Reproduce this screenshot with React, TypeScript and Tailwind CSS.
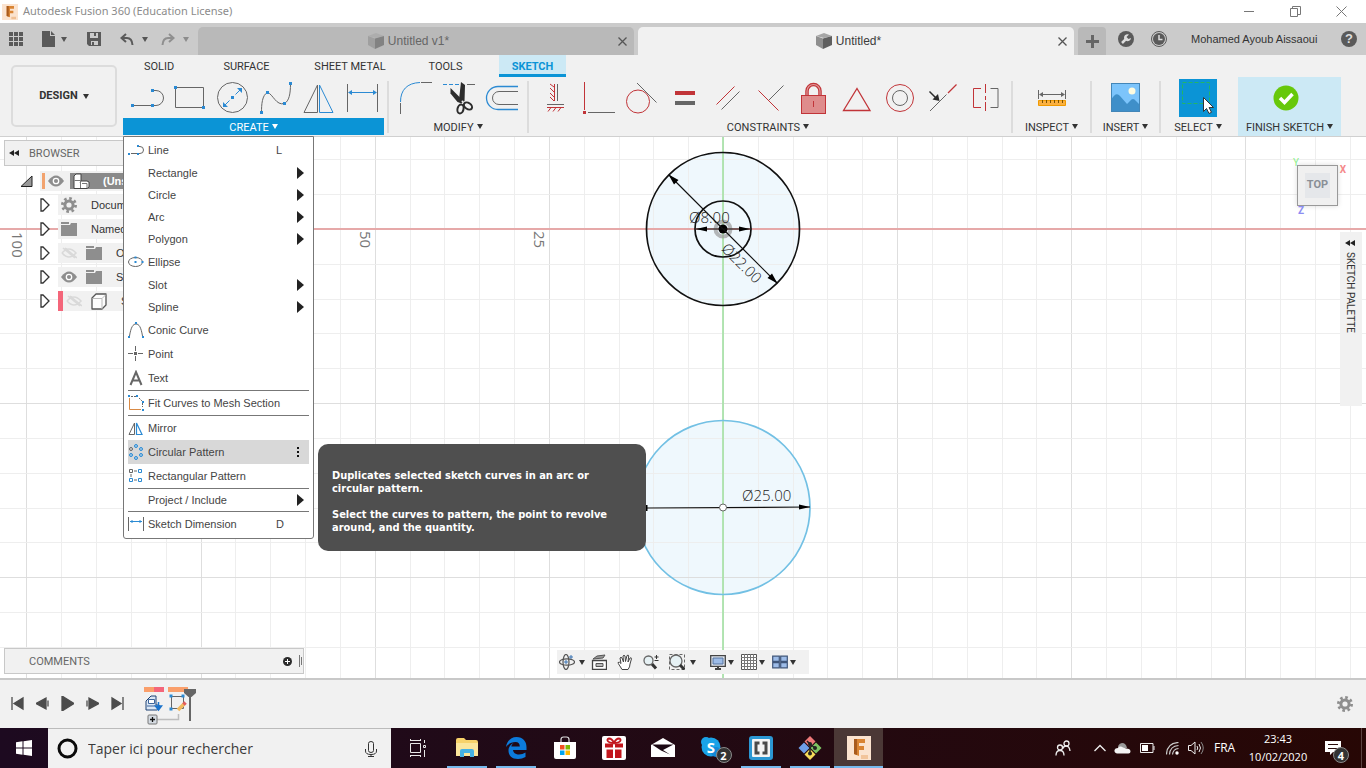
import type { ReactNode } from "react";

const DARK = "#666666";
const BLUE = "#2b8ad3";
const RED = "#c13438";

type IconProps = { w: number; h: number; children: ReactNode; className?: string };

const Icon = ({ w, h, children, className = "" }: IconProps) => (
  <svg width={w} height={h} viewBox={`0 0 ${w} ${h}`} fill="none" className={`shrink-0 ${className}`} aria-hidden="true">
    {children}
  </svg>
);

const Caret = ({ className = "" }: { className?: string }) => (
  <Icon w={6} h={5} className={className}>
    <path d="M0 0h6L3 5z" fill="currentColor" />
  </Icon>
);

const Dot = ({ x, y, c = BLUE, s = 3 }: { x: number; y: number; c?: string; s?: number }) => (
  <rect x={x - s / 2} y={y - s / 2} width={s} height={s} fill={c} />
);

const FusionLogo = ({ size }: { size: number }) => (
  <svg width={size} height={size} viewBox="0 0 24 24" aria-hidden="true" className="shrink-0">
    <rect width="24" height="24" fill="#fbe3cf" />
    <path d="M7 3h11v4h-6v3h5v4h-5v6l-5-2z" fill="#d98433" />
    <path d="M7 3h3v16l-3-1z" fill="#a85a1c" />
    <path d="M14 20h7M14 22h7" stroke="#e9a566" strokeWidth="1" />
  </svg>
);

const Gear = ({ size, hole }: { size: number; hole: string }) => (
  <svg width={size} height={size} viewBox="0 0 16 16" aria-hidden="true" className="shrink-0">
    <circle cx="8" cy="8" r="5.6" fill="#8e8e8e" />
    <circle cx="8" cy="8" r="6.6" fill="none" stroke="#8e8e8e" strokeWidth="2.8" strokeDasharray="2.6 2.584" />
    <circle cx="8" cy="8" r="2.6" fill={hole} />
  </svg>
);

/* ---------- Ribbon tools, each drawn in a 43x36 cell ---------- */

const createTools = [
  {
    name: "Line",
    art: (
      <>
        <path d="M7 25.5H27M29 10.5h2a7.5 7.5 0 0 1 0 15h-3" stroke={DARK} />
        <Dot x={7.5} y={25.5} /><Dot x={27.5} y={25.5} /><Dot x={27.5} y={10.5} />
      </>
    ),
  },
  {
    name: "Rectangle",
    art: (
      <>
        <path d="M7.5 7.5h28v20h-28z" stroke={DARK} />
        <Dot x={7.5} y={7.5} /><Dot x={35.5} y={27.5} />
      </>
    ),
  },
  {
    name: "Circle",
    art: (
      <>
        <circle cx="21.5" cy="17.5" r="15" stroke={DARK} />
        <path d="M13 26l5.5-5.5M24.5 14.5l5.5-5.5" stroke={BLUE} />
        <path d="M12 27v-5l5 5zM31 8v5l-5-5z" fill={BLUE} />
        <Dot x={21.5} y={17.5} />
      </>
    ),
  },
  {
    name: "Spline",
    art: (
      <>
        <path d="M7.5 32C7.5 25 8 15 13.5 12.5C19 14 22 26 30.5 23.5C35 21 36.5 14 36.5 4" stroke={DARK} />
        <Dot x={7.5} y={32.5} /><Dot x={13.5} y={12.5} /><Dot x={30.5} y={23.5} /><Dot x={36.5} y={3.5} />
      </>
    ),
  },
  {
    name: "Mirror",
    art: (
      <>
        <path d="M20.5 5v27.5H7z" stroke={DARK} />
        <path d="M22.5 5v27.5H36z" stroke={BLUE} />
      </>
    ),
  },
  {
    name: "Sketch Dimension",
    art: (
      <>
        <path d="M7.5 4v28M37.5 4v28" stroke={DARK} />
        <path d="M9 12.5h27" stroke={BLUE} />
        <path d="M8 12.5l4-2.5v5zM37 12.5l-4-2.5v5z" fill={BLUE} />
      </>
    ),
  },
];

const modifyTools = [
  {
    name: "Fillet",
    art: (
      <>
        <path d="M5.5 34V23M26 2.5h11" stroke={DARK} />
        <path d="M5.5 22C5.5 10 12 3 25 2.5" stroke={BLUE} />
      </>
    ),
  },
  {
    name: "Trim",
    art: (
      <>
        <path d="M5 4.5h16" stroke={BLUE} strokeDasharray="4 2" />
        <path d="M29 4.5h8" stroke={DARK} />
        <path d="M23 2l4 3-.5 16-3.5 1.5-2-3z" fill="#2c2c2c" />
        <path d="M12.5 8l13 13-2 2.5-4-1.5-7-8.5z" fill="#2c2c2c" />
        <ellipse cx="22.5" cy="29" rx="3" ry="4.5" stroke="#2c2c2c" strokeWidth="2" transform="rotate(14 22.5 29)" />
        <ellipse cx="30" cy="26" rx="4.5" ry="3" stroke="#2c2c2c" strokeWidth="2" transform="rotate(35 30 26)" />
        <circle cx="24.5" cy="21.5" r="1" fill="#f1f1f1" />
      </>
    ),
  },
  {
    name: "Offset",
    art: (
      <>
        <path d="M37 6.5H17a11.5 11.5 0 0 0 0 23h20" stroke={BLUE} strokeWidth="1.3" />
        <path d="M37 11.5H18a6.5 6.5 0 0 0 0 13h19" stroke={DARK} />
      </>
    ),
  },
];

const constraintTools = [
  {
    name: "Horizontal/Vertical",
    art: (
      <>
        <path d="M20.5 4v17M13 27.5h17M20 7l-4-3M20 12l-4-4M20 17l-4-4M20 21l-4-4M14 31.5l3-4M19 31.5l3-4M24 31.5l3-4" stroke={RED} />
        <path d="M23.5 4v17M13 24.5h17" stroke={DARK} />
      </>
    ),
  },
  {
    name: "Coincident",
    art: (
      <>
        <path d="M7.5 2v28" stroke={RED} />
        <path d="M11 32.5h27" stroke={DARK} />
        <Dot x={7.5} y={32.5} c={RED} />
      </>
    ),
  },
  {
    name: "Tangent",
    art: (
      <>
        <circle cx="18" cy="21.5" r="11.5" stroke={RED} />
        <path d="M17 3l19.5 19.5" stroke={DARK} />
      </>
    ),
  },
  {
    name: "Equal",
    art: (
      <>
        <path d="M12 13h20" stroke={RED} strokeWidth="4" />
        <path d="M12 23h20" stroke={DARK} strokeWidth="4" />
      </>
    ),
  },
  {
    name: "Parallel",
    art: (
      <>
        <path d="M10.5 24.5l18-18" stroke={RED} />
        <path d="M15.5 29.5l18-18" stroke={DARK} />
      </>
    ),
  },
  {
    name: "Perpendicular",
    art: (
      <>
        <path d="M9.5 10.5l20 20" stroke={RED} />
        <path d="M20 20l14.5-14.5" stroke={DARK} />
      </>
    ),
  },
  {
    name: "Fix/Unfix",
    art: (
      <>
        <path d="M15 15.5V11a6.5 6.5 0 0 1 13 0v4.5" stroke={RED} strokeWidth="3.5" />
        <path d="M15 15.5V11a6.5 6.5 0 0 1 13 0v4.5" stroke="#e09a9a" strokeWidth="1.2" />
        <rect x="9.5" y="15.5" width="24" height="18" fill="#df8c8c" stroke={RED} />
        <path d="M21.5 21v6" stroke={RED} />
      </>
    ),
  },
  { name: "Midpoint", art: <path d="M22 8.5l13 22H8.5z" stroke={RED} strokeWidth="1.3" /> },
  {
    name: "Concentric",
    art: (
      <>
        <circle cx="22" cy="18" r="13.5" stroke={RED} />
        <circle cx="22" cy="18" r="7.5" stroke={DARK} />
      </>
    ),
  },
  {
    name: "Collinear",
    art: (
      <>
        <path d="M35.5 4.5L27 13" stroke={RED} strokeWidth="1.3" />
        <path d="M25.5 14.5L9 31" stroke={DARK} />
        <path d="M8.5 11.5l6 6" stroke="#2c2c2c" strokeWidth="1.5" />
        <path d="M18.5 21l-7-1.5 5.5-5.5z" fill="#2c2c2c" />
      </>
    ),
  },
  {
    name: "Symmetry",
    art: (
      <>
        <path d="M17 8.5H9.5v19H17" stroke={RED} />
        <path d="M21.5 4v9M21.5 16v4M21.5 22v9" stroke={RED} />
        <path d="M26.5 8.5H34v19h-7.5" stroke={DARK} />
      </>
    ),
  },
];

type Tool = { name: string; art: ReactNode };

const ToolRow = ({ tools }: { tools: Tool[] }) => (
  <div className="flex">
    {tools.map((tool) => (
      <button key={tool.name} type="button" aria-label={tool.name} className="h-9 w-[43px]">
        <Icon w={43} h={36}>{tool.art}</Icon>
      </button>
    ))}
  </div>
);

const GroupLabel = ({ children, className = "" }: { children: ReactNode; className?: string }) => (
  <button
    type="button"
    className={`flex h-[17px] w-full items-center justify-center gap-[3px] whitespace-nowrap text-[11px] ${className}`}
  >
    <span className="pt-[2px] leading-[15px]">{children}</span>
    <Caret />
  </button>
);

const Separator = () => <div className="mt-1 h-[52px] w-[2px] shrink-0 bg-[#dcdcdc]" />;

/* ---------- Create menu ---------- */

type MenuEntry = { label: string; icon?: ReactNode; sub?: boolean; keyHint?: string; active?: boolean; line?: boolean };

const menu: MenuEntry[] = [
  {
    label: "Line",
    keyHint: "L",
    icon: (
      <>
        <path d="M3 11.5h6M11 4.5h1a3.5 3.5 0 0 1 0 7h-1" stroke={DARK} />
        <Dot x={1} y={12} s={2} /><Dot x={10} y={12} s={2} /><Dot x={10} y={4} s={2} />
      </>
    ),
  },
  { label: "Rectangle", sub: true },
  { label: "Circle", sub: true },
  { label: "Arc", sub: true },
  { label: "Polygon", sub: true },
  {
    label: "Ellipse",
    icon: (
      <>
        <ellipse cx="7.5" cy="8" rx="7" ry="4.5" stroke={DARK} />
        <Dot x={7.5} y={8} s={2} /><Dot x={14.5} y={8} s={2} /><Dot x={7.5} y={3.5} s={2} />
      </>
    ),
  },
  { label: "Slot", sub: true },
  { label: "Spline", sub: true },
  {
    label: "Conic Curve",
    icon: (
      <>
        <path d="M1.5 14C3 5 5 2 8 2s5 3 6.5 12" stroke={DARK} />
        <Dot x={1} y={15} s={2} /><Dot x={15} y={15} s={2} /><Dot x={8} y={1} s={2} />
      </>
    ),
  },
  {
    label: "Point",
    icon: (
      <>
        <path d="M7.5 0v5M7.5 10v5M0 7.5h5M10 7.5h5" stroke={DARK} />
        <Dot x={7.5} y={7.5} c={DARK} />
      </>
    ),
  },
  { label: "Text", icon: <path d="M2.5 15L8 2l5.5 13M4.500 10.500h7" stroke={DARK} strokeWidth="2" /> },
  {
    label: "Fit Curves to Mesh Section",
    line: true,
    icon: (
      <>
        <path d="M1.5 3v11.5H13" stroke="#d98a45" />
        <path d="M3 1.5h6M11 3l3 3M14.5 8v4" stroke={DARK} strokeDasharray="2 1" />
        <Dot x={1} y={1} s={2} /><Dot x={9} y={1} s={2} /><Dot x={15} y={7} s={2} /><Dot x={15} y={15} s={2} />
      </>
    ),
  },
  {
    label: "Mirror",
    line: true,
    icon: (
      <>
        <path d="M6.5 3v11.5H1z" stroke={DARK} />
        <path d="M8.5 3v11.5H14z" stroke={BLUE} strokeWidth="1.2" />
      </>
    ),
  },
  {
    label: "Circular Pattern",
    active: true,
    icon: (
      <>
        <g stroke={BLUE} fill="#a8cdea">
          <circle cx="8" cy="2" r="1.5" /><circle cx="13" cy="5" r="1.5" /><circle cx="13" cy="11" r="1.5" />
          <circle cx="8" cy="14" r="1.5" /><circle cx="3" cy="11" r="1.5" />
        </g>
        <circle cx="3" cy="5" r="1.5" stroke={DARK} />
      </>
    ),
  },
  {
    label: "Rectangular Pattern",
    icon: (
      <>
        <path d="M1.5 1.5h3v3h-3z" stroke={DARK} />
        <path d="M10.5 1.5h3v3h-3zM1.5 10.5h3v3h-3zM10.5 10.5h3v3h-3z" stroke={BLUE} />
        <path d="M6 3h3M6 12h3M3 6v3" stroke={DARK} />
      </>
    ),
  },
  { label: "Project / Include", sub: true, line: true },
  {
    label: "Sketch Dimension",
    line: true,
    keyHint: "D",
    icon: (
      <>
        <path d="M.5 1v14M15.5 1v14" stroke={DARK} />
        <path d="M2 5.5h12M4 4v3M12 4v3" stroke={BLUE} />
      </>
    ),
  },
];

const CreateMenu = () => (
  <ul className="absolute left-0 top-full mt-px w-[191px] rounded-b-[3px] border border-[#777] bg-white px-1 pb-[2px] pt-px font-['Liberation_Sans',Arial,sans-serif] text-[11px] text-[#444]">
    {menu.map((item) => (
      <li key={item.label} className={`relative ${item.line ? "border-t border-[#777]" : ""}`}>
        <button
          type="button"
          className={`flex w-full items-center pr-[5px] text-left ${item.icon ? "h-6" : "h-[22px]"} ${item.active ? "bg-[#d8d8d8]" : ""}`}
        >
          <Icon w={16} h={16} className="mr-1">{item.icon}</Icon>
          <span className="flex-1 whitespace-nowrap">{item.label}</span>
          {item.keyHint && <span className="w-7">{item.keyHint}</span>}
          {item.sub && (
            <Icon w={7} h={12}><path d="M0 0l7 6-7 6z" fill="#222" /></Icon>
          )}
          {item.active && (
            <Icon w={12} h={12}><path d="M6 1v2M6 5v2M6 9v2" stroke="#111" strokeWidth="2" /></Icon>
          )}
        </button>
        {item.active && (
          <div
            role="tooltip"
            className="absolute left-full top-1 ml-[9px] w-[328px] whitespace-nowrap rounded-[10px] bg-[#4f4f4f] px-[14px] pb-[17px] pt-[25px] font-['DejaVu_Sans_Condensed','Noto_Sans',sans-serif] text-[11px] font-bold leading-[13px] text-white"
          >
            <p>Duplicates selected sketch curves in an arc or<br />circular pattern.</p>
            <p className="mt-[13px]">Select the curves to pattern, the point to revolve<br />around, and the quantity.</p>
          </div>
        )}
      </li>
    ))}
  </ul>
);

/* ---------- Top bars ---------- */

const TitleBar = () => (
  <div className="flex h-[23px] items-center bg-white pl-[2px] text-[#8b8b8b]">
    <FusionLogo size={16} />
    <h1 className="ml-[5px] flex-1 font-['Noto_Sans',sans-serif] text-[11px]">Autodesk Fusion 360 (Education License)</h1>
    <button type="button" aria-label="Minimize" className="flex w-[46px] justify-center">
      <Icon w={11} h={11}><path d="M0 5.5h10" stroke="#777" /></Icon>
    </button>
    <button type="button" aria-label="Restore" className="flex w-[46px] justify-center">
      <Icon w={11} h={11}><path d="M.5 2.5h7v8h-7zM2.5 2.5v-2h8v8h-2.5" stroke="#777" /></Icon>
    </button>
    <button type="button" aria-label="Close window" className="mr-[2px] flex w-[46px] justify-center">
      <Icon w={11} h={11}><path d="M.5.5l10 10M10.500.5l-10 10" stroke="#777" /></Icon>
    </button>
  </div>
);

const CubeIcon = ({ className = "" }: { className?: string }) => (
  <Icon w={16} h={16} className={`mr-1 ${className}`}>
    <path d="M0 3L8 0l8 3-8 2z" fill="#a6a6a6" />
    <path d="M0 3l7 2.500V16l-7-4z" fill="#8f8f8f" />
    <path d="M7 5.500L16 3v9l-9 4z" fill="#5f5f5f" />
  </Icon>
);

const DocTab = ({ title, active }: { title: string; active?: boolean }) => (
  <div
    className={`flex h-7 flex-1 items-center rounded-t-[5px] pr-[5px] text-xs ${active ? "bg-[#f1f1f1] text-[#3c3c3c]" : "bg-[#b9b9b9] text-[#666]"}`}
  >
    <button type="button" className="flex flex-1 items-center justify-center pl-[3px]">
      <CubeIcon className={active ? "" : "opacity-60"} />
      {title}
    </button>
    <button type="button" aria-label={`Close ${title}`} className="p-[2px]">
      <Icon w={9} h={9}><path d="M.5.5l8 8M8.500.5l-8 8" stroke="#555" strokeWidth="1.3" /></Icon>
    </button>
  </div>
);

const TabBar = () => (
  <div className="flex h-8 items-end bg-[#cbcbcb] text-[#555]">
    <div className="flex h-8 w-[198px] items-center pl-[9px]">
      <button type="button" aria-label="Data panel">
        <Icon w={14} h={14}>
          <path d="M0 2h4M5 2h4M10 2h4M0 7h4M5 7h4M10 7h4M0 12h4M5 12h4M10 12h4" stroke="#5a5a5a" strokeWidth="4" />
        </Icon>
      </button>
      <button type="button" aria-label="File" className="ml-[19px] flex items-center">
        <Icon w={13} h={16}><path d="M0 0h8v5h5v11H0zM9 0l4 4H9z" fill="#5a5a5a" /></Icon>
        <Caret className="ml-[6px]" />
      </button>
      <button type="button" aria-label="Save" className="ml-5">
        <Icon w={14} h={14}>
          <path d="M0 0h14v14H2l-2-2z" fill="#5a5a5a" />
          <path d="M3 1h8v5H3zM4 9h7v4H4z" fill="#cbcbcb" />
          <path d="M8 1v3M6 10v3" stroke="#5a5a5a" strokeWidth="2" />
        </Icon>
      </button>
      <button type="button" aria-label="Undo" className="ml-[19px] flex items-center">
        <Icon w={14} h={13}><path d="M6 1L1.5 5 6 9M2 5h5q5 0 5.5 7" stroke="#5a5a5a" strokeWidth="2" /></Icon>
        <Caret className="ml-2" />
      </button>
      <button type="button" aria-label="Redo" className="ml-[13px] flex items-center text-[#8c8c8c]">
        <Icon w={14} h={13}><path d="M8 1l4.5 4L8 9M12 5H7q-5 0-5.5 7" stroke="#8f8f8f" strokeWidth="2" /></Icon>
        <Caret className="ml-2" />
      </button>
    </div>
    <div className="flex flex-1 gap-1">
      <DocTab title="Untitled v1*" />
      <DocTab title="Untitled*" active />
    </div>
    <button type="button" aria-label="New design" className="ml-1 flex h-7 w-7 items-center justify-center rounded-t-[4px] bg-[#b9b9b9]">
      <Icon w={13} h={13}><path d="M0 6.5h13M6.5 0v13" stroke="#666" strokeWidth="3" /></Icon>
    </button>
    <div className="flex h-8 w-[260px] items-center pl-3 text-[11px] text-[#333]">
      <button type="button" aria-label="Extensions">
        <Icon w={16} h={16}>
          <circle cx="8" cy="8" r="8" fill="#5a5a5a" />
          <path d="M4 12l4.5-4.5" stroke="#ddd" strokeWidth="2.5" />
          <path d="M11 3.5A3.5 3.5 0 1 0 13 7l-2.5 1-2-2z" fill="#ddd" />
        </Icon>
      </button>
      <button type="button" aria-label="Job status" className="ml-[17px]">
        <Icon w={16} h={16}>
          <circle cx="8" cy="8" r="7.5" stroke="#5a5a5a" />
          <circle cx="8" cy="8" r="6" fill="#5a5a5a" />
          <path d="M8 4v4.5h3.5" stroke="#ddd" strokeWidth="1.5" />
        </Icon>
      </button>
      <button type="button" className="ml-6 flex-1 whitespace-nowrap text-left">Mohamed Ayoub Aissaoui</button>
      <button type="button" aria-label="Help" className="mr-[9px] flex h-4 w-4 items-center justify-center rounded-full bg-[#5a5a5a] text-[13px] font-bold leading-4 text-[#ddd]">
        ?
      </button>
    </div>
  </div>
);

const workspaceTabs = [
  { name: "SOLID", box: "w-[72px]" },
  { name: "SURFACE", box: "w-[103px]" },
  { name: "SHEET METAL", box: "w-[104px]" },
  { name: "TOOLS", box: "w-[87px]" },
];

const Ribbon = () => (
  <div className="relative z-10 flex border-b border-[#d0d0d0] bg-[#f1f1f1] font-[Roboto,sans-serif] text-[#333]">
    <button
      type="button"
      className="ml-[11px] mt-[10px] flex h-[62px] w-[106px] items-center justify-center gap-[5px] rounded-[5px] border-2 border-[#dcdcdc] text-[11px] font-bold"
    >
      <span className="pt-px">DESIGN</span>
      <Caret />
    </button>
    <div className="ml-[6px] flex-1">
      <div className="flex h-[22px] text-[11px]">
        {workspaceTabs.map((tab) => (
          <button key={tab.name} type="button" className={`h-[22px] whitespace-nowrap pt-[2px] ${tab.box}`}>
            {tab.name}
          </button>
        ))}
        <button type="button" className="ml-[10px] h-[22px] w-[67px] border-b-[3px] border-[#0b94d6] bg-[#cce9f5] pt-1 font-bold text-[#0b94d6]">
          SKETCH
        </button>
      </div>
      <div className="flex h-[59px]">
        <div className="relative mb-px flex w-[261px] flex-col gap-[2px] pt-[3px]">
          <div className="pl-[2px]"><ToolRow tools={createTools} /></div>
          <GroupLabel className="bg-[#0b94d6] text-white">CREATE</GroupLabel>
          <CreateMenu />
        </div>
        <div className="ml-[3px]"><Separator /></div>
        <div className="flex w-[138px] flex-col gap-[2px] pl-[6px] pt-[3px]">
          <ToolRow tools={modifyTools} />
          <div className="pr-[6px]"><GroupLabel>MODIFY</GroupLabel></div>
        </div>
        <Separator />
        <div className="flex w-[482px] flex-col gap-[2px] pt-[3px]">
          <div className="pl-[5px]"><ToolRow tools={constraintTools} /></div>
          <div className="pr-1"><GroupLabel>CONSTRAINTS</GroupLabel></div>
        </div>
        <Separator />
        <div className="flex w-[77px] flex-col items-center gap-[2px] pt-[3px]">
          <button type="button" aria-label="Measure">
            <Icon w={36} h={36}>
              <path d="M4.5 10v9M31.5 10v9M6 14.5h24" stroke={DARK} />
              <path d="M5 14.5l4-2.5v5zM31 14.5l-4-2.5v5z" fill={DARK} />
              <path d="M4.5 20.5h27v5h-27z" fill="#fbb040" stroke="#f09a00" />
              <path d="M8.5 20v3M12.5 20v3M16.5 20v3M20.5 20v3M24.5 20v3M28.5 20v3" stroke="#7a5200" />
            </Icon>
          </button>
          <GroupLabel>INSPECT</GroupLabel>
        </div>
        <Separator />
        <div className="flex w-[67px] flex-col items-center gap-[2px] pt-[3px]">
          <button type="button" aria-label="Insert image">
            <Icon w={36} h={36}>
              <rect x="3" y="3" width="29" height="29" fill="#7cc4fb" />
              <path d="M3 20q5-9 9-4l7 8 3-3q3-4 6 0l4 4v7H3z" fill="#3f8fc9" />
              <rect x="3.5" y="3.5" width="28" height="28" stroke="#4386b8" />
              <circle cx="24" cy="11" r="3.5" fill="#fdfbe0" />
            </Icon>
          </button>
          <GroupLabel>INSERT</GroupLabel>
        </div>
        <Separator />
        <div className="flex w-[77px] flex-col gap-px pt-[2px]">
          <button type="button" aria-label="Select" className="ml-[18px] h-[38px] w-[38px] bg-[#0b94d6]">
            <Icon w={38} h={38}>
              <path d="M3.5 3.5h27v21h-27z" stroke="#23b567" strokeDasharray="4 2" />
              <path d="M24.5 18.5v14l3-3 2.500 5 2.500-1.200-2.400-4.800h4.400z" fill="#fff" stroke="#333" />
            </Icon>
          </button>
          <div className="pr-[3px]"><GroupLabel>SELECT</GroupLabel></div>
        </div>
        <div className="flex w-[103px] flex-col gap-[2px] bg-[#cce9f5] pt-[3px]">
          <button type="button" aria-label="Finish sketch" className="ml-[30px] w-9">
            <Icon w={36} h={36}>
              <circle cx="18" cy="18" r="12.5" fill="#67c80b" />
              <path d="M12 18l4.500 4.500 8-8.500" stroke="#fff" strokeWidth="3.5" />
            </Icon>
          </button>
          <GroupLabel>FINISH SKETCH</GroupLabel>
        </div>
      </div>
    </div>
  </div>
);

/* ---------- Canvas ---------- */

const STEP = 34.83;
const columns = Array.from({ length: 40 }, (_, i) => i - 20);
const rows = Array.from({ length: 16 }, (_, i) => i - 3);

const gridColor = (i: number) => (i % 5 === 0 ? "#dadada" : "#ececec");

// Drawn around the sketch origin, one grid cell is 5 mm
const SketchView = () => (
  <svg
    className="absolute inset-0 h-full w-full bg-white font-['Open_Sans',sans-serif]"
    viewBox="-723 -92 1366 541"
    preserveAspectRatio="xMidYMid slice"
    role="img"
    aria-label="Sketch"
  >
    <circle r="76.5" fill="#eff8fd" />
    <circle cy="278.5" r="87" fill="#eff8fd" />
    {columns.map((i) => (
      <path key={i} d={`M${Math.round(i * STEP) + 0.5} -92V449`} stroke={gridColor(i)} strokeOpacity="0.9" />
    ))}
    {rows.map((i) => (
      <path key={i} d={`M-723 ${Math.round(i * STEP) + 0.5}H643`} stroke={gridColor(i)} strokeOpacity="0.9" />
    ))}
    <path d="M-723 0H643" stroke="#e6a9a9" strokeWidth="1.8" />
    <path d="M0 -92V449" stroke="#abe3ab" strokeWidth="1.8" />
    <circle r="7.5" stroke="#9a9a9a" strokeOpacity="0.7" strokeWidth="4" fill="none" />
    <circle r="76.5" stroke="#111" strokeWidth="1.7" fill="none" />
    <circle r="28" stroke="#111" strokeWidth="1.7" fill="none" />
    <circle r="4.5" fill="#000" />
    <path d="M-54 -54L54 54M-27 0H27" stroke="#111" strokeWidth="1.2" />
    <path d="M-54.5 -54.5l10 5.500-4.500 4.500zM54.5 54.5l-10-5.500 4.500-4.500zM-27 0l11-2.500v5zM27 0l-11-2.500v5z" fill="#000" />
    <g fontSize="15" fontWeight="300" fill="#222">
      <text x="-34" y="-6">Ø8.00</text>
      <text transform="translate(1 17) rotate(45)" x="0" y="5">Ø22.00</text>
      <text x="19" y="272">Ø25.00</text>
    </g>
    <g fontSize="15" fill="#777">
      <text transform="translate(-711 3) rotate(90)">100</text>
      <text transform="translate(-363 2) rotate(90)">50</text>
      <text transform="translate(-189 2) rotate(90)">25</text>
    </g>
    <circle cy="278.5" r="87" stroke="#72c0e4" strokeWidth="1.7" fill="none" />
    <path d="M-77 279L87 278" stroke="#111" strokeWidth="1.2" />
    <path d="M87 278l-11-2.500v5zM-78 276h2.500v6H-78z" fill="#000" />
    <circle cy="278.5" r="3.5" fill="#fff" stroke="#666" />
  </svg>
);

const Expander = () => (
  <Icon w={10} h={14} className="mr-2"><path d="M1 1h2l6 6-6 6H1z" fill="#fff" stroke="#333" strokeWidth="1.3" /></Icon>
);

const EyeIcon = ({ off }: { off?: boolean }) => (
  <Icon w={16} h={12}>
    {off ? (
      <path d="M1 6q7-8 14 0-7 8-14 0M2 1l12 10M4 1l12 10" stroke="#d9d9d9" strokeWidth="1.6" />
    ) : (
      <>
        <path d="M0 6q8-11 16 0-8 11-16 0" fill="#8e8e8e" />
        <circle cx="8" cy="6" r="2.7" stroke="#fff" strokeWidth="1.3" />
      </>
    )}
  </Icon>
);

const FolderIcon = () => (
  <Icon w={16} h={14}><path d="M0 0h8v2H0zM0 3h9l1-2h6v13H0z" fill="#8e8e8e" /></Icon>
);

const BodyIcon = () => (
  <Icon w={16} h={17}>
    <path d="M1 5l4-4h10v11l-4 4H1z" fill="#fdfdfd" stroke="#555" strokeLinejoin="round" strokeWidth="1.3" />
    <path d="M1.5 5.5H11V16M11 5.5l4-4" stroke="#bbb" />
  </Icon>
);

const PanelTitle = ({ children }: { children: ReactNode }) => (
  <h2 className="pt-[2px] text-[11px] leading-5 text-[#666]">{children}</h2>
);

const Browser = () => (
  <aside className="ml-1 mt-[3px] w-[300px] text-[11px] text-[#333]">
    <div className="flex h-[26px] items-center border border-[#c8c8c8] bg-[#f1f1f1] pl-1 font-[Roboto,sans-serif]">
      <Icon w={10} h={6} className="mr-[10px]"><path d="M5 0v6L0 3zM10 0v6L5 3z" fill="#222" /></Icon>
      <PanelTitle>BROWSER</PanelTitle>
    </div>
    <ul className="mt-[5px] flex w-[119px] flex-col gap-1 overflow-hidden whitespace-nowrap">
      <li className="flex h-5 items-center pl-4">
        <Icon w={13} h={12} className="mr-[7px]"><path d="M1 11.5L12 1v10.5z" fill="#999" stroke="#222" /></Icon>
        <div className="flex h-5 flex-1 items-center bg-[#f1f1f1] pl-[2px]">
          <span className="mr-[3px] h-4 w-[3px] shrink-0 bg-[#f2a36e]" />
          <EyeIcon />
          <div className="ml-[6px] flex h-4 flex-1 items-center bg-[#8a8a8a] pl-[3px] font-bold text-white">
            <Icon w={17} h={16} className="mr-[13px]">
              <path d="M1 3l2-2h5v7h6l2 1v5l-2 1.500H1z" fill="#fff" stroke="#444" />
              <path d="M1.5 7.5h6V15M8 8l-1 1.5M9 10.5h5V15" stroke="#777" />
            </Icon>
            (Unsaved)
          </div>
        </div>
      </li>
      <li className="flex h-5 items-center pl-9">
        <Expander />
        <div className="flex h-5 flex-1 items-center bg-[#f1f1f1] pl-[3px]">
          <Gear size={16} hole="#f1f1f1" />
          <span className="ml-[14px]">Document Settings</span>
        </div>
      </li>
      <li className="flex h-5 items-center pl-9">
        <Expander />
        <div className="flex h-5 flex-1 items-center bg-[#f1f1f1] pl-[3px]">
          <FolderIcon />
          <span className="ml-[14px]">Named Views</span>
        </div>
      </li>
      <li className="flex h-5 items-center pl-9">
        <Expander />
        <div className="flex h-5 flex-1 items-center bg-[#f1f1f1] pl-[3px]">
          <EyeIcon off />
          <span className="ml-[9px]"><FolderIcon /></span>
          <span className="ml-[14px]">Origin</span>
        </div>
      </li>
      <li className="flex h-5 items-center pl-9">
        <Expander />
        <div className="flex h-5 flex-1 items-center bg-[#f1f1f1] pl-[3px]">
          <EyeIcon />
          <span className="ml-[9px]"><FolderIcon /></span>
          <span className="ml-[14px]">Sketches</span>
        </div>
      </li>
      <li className="flex h-5 items-center pl-9">
        <Expander />
        <div className="flex h-5 flex-1 items-center bg-[#f1f1f1]">
          <span className="mr-[3px] h-5 w-[5px] shrink-0 bg-[#f4667a]" />
          <EyeIcon off />
          <span className="ml-[9px]"><BodyIcon /></span>
          <span className="ml-[14px]">Sketch1</span>
        </div>
      </li>
    </ul>
  </aside>
);

const ViewCube = () => (
  <div className="relative mr-[2px] mt-7 h-[41px] font-[Roboto,sans-serif]">
    <button
      type="button"
      className="flex h-[41px] w-[41px] items-center justify-center border border-[#999] bg-[#f0f0f0] text-[11px] font-bold text-[#8a8f96] shadow-[0_0_5px_rgba(0,0,0,0.15)]"
    >
      <span className="flex h-[25px] w-[25px] items-center justify-center bg-[#e5e7ea]">TOP</span>
    </button>
    <span className="absolute -left-1 -top-2 text-[10px] leading-3 text-[#8bf08b]">Y</span>
    <span className="absolute -right-2 -top-px text-[10px] font-bold leading-3 text-[#f58a8a]">X</span>
    <span className="absolute left-px top-10 text-[10px] font-bold leading-3 text-[#8d8df2]">Z</span>
  </div>
);

const SketchPalette = () => (
  <button
    type="button"
    className="mr-1 mt-[95px] flex h-[174px] w-[22px] flex-col items-center bg-[#f1f1f1] pr-[2px] pt-2 font-[Roboto,sans-serif] text-[10px] text-[#333]"
  >
    <Icon w={10} h={6} className="mb-[6px]"><path d="M5 0v6L0 3zM10 0v6L5 3z" fill="#222" /></Icon>
    <span className="whitespace-nowrap [writing-mode:vertical-rl]">SKETCH PALETTE</span>
  </button>
);

const Comments = () => (
  <div className="ml-1 flex h-[26px] w-[300px] items-center justify-between border border-[#c8c8c8] bg-[#f1f1f1] pl-6 font-[Roboto,sans-serif]">
    <PanelTitle>COMMENTS</PanelTitle>
    <button type="button" aria-label="Add comment" className="flex items-center gap-[7px]">
      <Icon w={9} h={9}>
        <circle cx="4.5" cy="4.5" r="4.5" fill="#2b2b2b" />
        <path d="M4.5 2v5M2 4.5h5" stroke="#fff" />
      </Icon>
      <Icon w={4} h={12}><path d="M.5 0v12M2.5 2v8" stroke="#777" /></Icon>
    </button>
  </div>
);

const navTools = [
  {
    name: "Orbit",
    caret: "ml-1 mr-[6px]",
    art: (
      <>
        <ellipse cx="8" cy="8" rx="7.5" ry="3.2" stroke="#555" strokeWidth="1.2" />
        <ellipse cx="7" cy="8" rx="3" ry="7.5" stroke="#555" strokeWidth="1.2" />
        <path d="M7 6v4M5 8h4M10 3h4M12 1v4" stroke="#3a74b4" />
      </>
    ),
  },
  {
    name: "Look At",
    art: (
      <>
        <path d="M1.5 6.5h14v9h-14z" fill="#fff" stroke="#444" strokeWidth="1.3" />
        <path d="M5 9.5h7v3H5z" fill="#bbb" stroke="#555" />
        <path d="M2 5l4-3 8-1-2 3z" fill="#999" stroke="#555" />
      </>
    ),
  },
  {
    name: "Pan",
    art: (
      <path
        d="M5 15.5C3 12 1 9.5 1 8.5q1.500-1 3 1L3 4q1-1.500 2 0l1.500 4L6 2q1-1.500 2 0l.5 5.500L10 1.500q1.500-1 1.700.5L11 8l2-4q1.500-.7 1.500.7L13 10q0 3-2 5.500z"
        fill="#fff"
        stroke="#444"
      />
    ),
  },
  {
    name: "Zoom",
    art: (
      <>
        <circle cx="5.5" cy="6.5" r="4.5" fill="#e6f1f4" stroke="#666" strokeWidth="1.3" />
        <path d="M9 10l4 4.500" stroke="#333" strokeWidth="3" />
        <path d="M13.5 1v4M11.5 3h4M11.5 6.5h4" stroke="#333" />
      </>
    ),
  },
  {
    name: "Fit",
    caret: "ml-[5px] mr-[14px]",
    art: (
      <>
        <path d="M.5.5h15v15H.5z" stroke="#666" strokeDasharray="3 2" />
        <circle cx="7" cy="7" r="6" fill="#e6f1f4" stroke="#666" strokeWidth="1.3" />
        <path d="M11 11l4.500 4.500" stroke="#333" strokeWidth="3" />
      </>
    ),
  },
  {
    name: "Display Settings",
    caret: "ml-[2px] mr-[7px]",
    art: (
      <>
        <path d="M.7 1.7h14.6v10.6H.7z" fill="#dfe5ee" stroke="#444" strokeWidth="1.3" />
        <path d="M3 4h10v6H3z" fill="#9dbce8" stroke="#56759f" />
        <path d="M5 15h6M8 12v3" stroke="#444" strokeWidth="2" />
      </>
    ),
  },
  {
    name: "Grid and Snaps",
    caret: "ml-[2px] mr-[7px]",
    art: (
      <>
        <path d="M.5.5h15v15H.5z" fill="#fff" stroke="#555" />
        <path d="M3.5 0v16M6.5 0v16M9.5 0v16M12.5 0v16M0 3.5h16M0 6.5h16M0 9.5h16M0 12.5h16" stroke="#777" />
      </>
    ),
  },
  {
    name: "Viewports",
    caret: "ml-[2px]",
    art: (
      <path d="M.7 2.200h6.600v5.100H.7zM8.700 2.200h6.600v5.100H8.700zM.7 8.700h6.600v5.100H.7zM8.700 8.700h6.600v5.100H8.700z" fill="#9dbce8" stroke="#3f567a" strokeWidth="1.2" />
    ),
  },
];

const NavBar = () => (
  <div className="flex h-6 w-[252px] items-center bg-[#f1f1f1] pl-[2px] text-[#333]">
    {navTools.map((tool) => (
      <button key={tool.name} type="button" aria-label={tool.name} className={`flex items-center ${tool.caret ? "" : "mr-[10px]"}`}>
        <Icon w={16} h={16}>{tool.art}</Icon>
        {tool.caret && <Caret className={tool.caret} />}
      </button>
    ))}
  </div>
);

const Canvas = () => (
  <main className="relative flex flex-1 flex-col justify-between overflow-hidden">
    <SketchView />
    <div className="relative flex items-start justify-between">
      <Browser />
      <div className="flex items-start">
        <ViewCube />
        <SketchPalette />
      </div>
    </div>
    <div className="relative grid grid-cols-[1fr_auto_1fr] items-end pb-1">
      <Comments />
      <NavBar />
    </div>
  </main>
);

/* ---------- Timeline ---------- */

const playback = [
  { name: "Go to start", d: "M1 1v13M12 2v11L3 7.5z" },
  { name: "Step back", d: "M10 2v11L0 7.5zM12 4.5v6" },
  { name: "Play", d: "M1 0v15l12-7.5z" },
  { name: "Step forward", d: "M3 2v11l10-5.5zM1 4.5v6" },
  { name: "Go to end", d: "M1 2v11l9-5.5zM12 1v13" },
];

const Timeline = () => (
  <footer className="flex h-[50px] items-start border-t-2 border-[#c8c8c8] bg-[#f1f1f1]">
    <div className="flex gap-3 pl-[11px] pt-4">
      {playback.map((p) => (
        <button key={p.name} type="button" aria-label={p.name}>
          <Icon w={13} h={15}><path d={p.d} fill="#4c4c4c" stroke="#4c4c4c" strokeWidth="1.3" /></Icon>
        </button>
      ))}
    </div>
    <div className="pl-5 pt-[7px]">
      <Icon w={54} h={40}>
        <path d="M0 2.5h10M24 2.5h20" stroke="#fa9f6b" strokeWidth="5" />
        <path d="M10 2.5h10" stroke="#f4667a" strokeWidth="5" />
        <path d="M4 12l3-3h5v9h3l1 3-3 2H2V14z" fill="#dbe7f5" stroke="#1f4274" />
        <path d="M4.500 12.500h6v4h-6zM3 19h9" fill="#fff" stroke="#3c659c" />
        <path d="M14.500 15v6M11.500 19l3 4 3-4z" fill="#1c74cc" stroke="#1c74cc" strokeWidth="1.5" />
        <path d="M27.500 9.500h12v12h-12z" stroke={DARK} />
        <Dot x={27} y={9} /><Dot x={39} y={9} /><Dot x={27} y={22} />
        <path d="M34 23l6-6" stroke="#f1b95e" strokeWidth="3.5" />
        <path d="M39.500 17.500l2-2" stroke="#e25c5c" strokeWidth="3.5" />
        <path d="M13 32.500h21.500V27" stroke="#bdbdbd" strokeWidth="1.5" />
        <rect x="4" y="28" width="9" height="9" rx="1" fill="#d5dbe2" stroke="#777" />
        <path d="M8.500 30v5M6 32.500h5" stroke="#111" strokeWidth="1.3" />
        <path d="M40 2h12v4l-4.500 4h-3L40 6z" fill="#666" />
        <path d="M46 8v26" stroke="#666" strokeWidth="2" />
      </Icon>
    </div>
    <button type="button" aria-label="Timeline settings" className="ml-auto mr-[13px] mt-4">
      <Gear size={16} hole="#f1f1f1" />
    </button>
  </footer>
);

/* ---------- Windows taskbar ---------- */

const apps = [
  {
    name: "Task view",
    art: <path d="M4.500 7.500h10v9h-10zM4.500 5V3M14.500 5V3M4.500 19v2M14.500 19v2M4 4.500h11M4 19.500h11M18.500 4v3M18.500 14v7M17.500 9.500h2v2h-2z" stroke="#e8e8e8" />,
  },
  {
    name: "File Explorer",
    bar: "w-10",
    art: (
      <>
        <path d="M1 4q0-2 2-2h6l2 2h10q2 0 2 2v14H1z" fill="#f7d26a" />
        <path d="M1 7h22v12q0 1-1 1H2q-1 0-1-1z" fill="#fbe69c" />
        <path d="M5 21v-6q0-2 2-2h10q2 0 2 2v6h-4v-4H9v4z" fill="#45b1e4" />
      </>
    ),
  },
  {
    name: "Edge",
    bar: "w-10",
    art: (
      <path
        d="M2 11C3 5 7 1 12.500 1 19 1 22.500 5.500 22.500 11v3H9c.3 3 3 4.500 6 4.500 2.500 0 4.500-.7 6.500-1.900v4.500C19 22.400 17 23 14 23c-6 0-9.500-3.500-9.500-8.500 0-3.500 2-6 5-7.500C8 8.300 7.500 9.500 7.300 10.500h8.500C15.800 8 14.500 6 11.500 6 7.500 6 4 8 2 11z"
        fill="#0c7bdc"
      />
    ),
  },
  {
    name: "Store",
    art: (
      <>
        <path d="M8 6V3.500Q8 1 10.500 1h3Q16 1 16 3.500V6" stroke="#ddd" strokeWidth="1.2" />
        <path d="M1 6h22v15q0 2-2 2H3q-2 0-2-2z" fill="#fff" />
        <path d="M7 9h4.500v4.500H7z" fill="#f25022" /><path d="M12.500 9H17v4.500h-4.500z" fill="#7fba00" />
        <path d="M7 14.500h4.500V19H7z" fill="#00a4ef" /><path d="M12.500 14.500H17V19h-4.500z" fill="#ffb900" />
      </>
    ),
  },
  {
    name: "Offers",
    art: (
      <>
        <rect width="24" height="24" rx="2" fill="#fff" />
        <path d="M3 7.500h18V12H3zM4.500 13h15v9h-15z" fill="#c2161d" />
        <path d="M12 7v15M3 12.500h18" stroke="#fff" strokeWidth="2" />
        <path d="M12 7C5 7 4 3 7 2.500c3 0 5 4.500 5 4.500s2-4.500 5-4.500c3 .5 2 4.500-5 4.500z" stroke="#c2161d" strokeWidth="1.8" />
      </>
    ),
  },
  {
    name: "Mail",
    art: (
      <>
        <path d="M0 9l12-7 12 7v12H0z" fill="#fff" />
        <path d="M1 8.500h21.500L12 14l7 4.500-9-4z" fill="#1c0914" />
      </>
    ),
  },
  {
    name: "Skype",
    badge: "2",
    art: (
      <>
        <circle cx="11" cy="11" r="9.5" fill="#1aa3e8" />
        <circle cx="6" cy="6" r="5" fill="#1aa3e8" /><circle cx="16" cy="16" r="5" fill="#1389d6" />
        <text x="11" y="16.500" textAnchor="middle" fontSize="15" fontWeight="bold" fill="#fff">S</text>
      </>
    ),
  },
  {
    name: "Brackets",
    bar: "w-10",
    art: (
      <>
        <rect width="24" height="24" rx="3" fill="#2b97d3" />
        <rect x="3" y="3" width="18" height="18" rx="1" fill="#f4f4f4" />
        <path d="M10.500 7h-3.500v10h3.500M13.500 7h3.500v10h-3.500" stroke="#4a4a4a" strokeWidth="3" />
      </>
    ),
  },
  {
    name: "Git",
    bar: "w-10",
    art: (
      <>
        <path d="M12 0l5.500 5.500L12 11 6.500 5.500z" fill="#ef7a7a" />
        <path d="M18 6.500l5.500 5.500-5.500 5.500-5.500-5.500z" fill="#7ec463" />
        <path d="M6 6.500l5.500 5.500L6 17.500.500 12z" fill="#6f9fe8" />
        <path d="M12 13l5.500 5.500L12 24l-5.500-5.500z" fill="#f7dc5a" />
        <path d="M12 7v11M12 8l5 4M12 8L9 5" stroke="#222" strokeWidth="1.5" />
        <circle cx="12" cy="17.500" r="2" fill="#222" /><circle cx="17" cy="12" r="2" fill="#222" /><circle cx="12" cy="8" r="2" fill="#222" />
      </>
    ),
  },
  { name: "Fusion 360", bar: "w-full", active: true, art: <FusionLogo size={24} /> },
];

const Badge = ({ children }: { children: ReactNode }) => (
  <span className="absolute left-full top-1/2 -ml-2 -mt-px flex h-4 w-4 items-center justify-center rounded-full border border-[#8a8a8a] bg-[#333] text-[11px] font-bold leading-none text-white">
    {children}
  </span>
);

const Taskbar = () => (
  <nav className="flex h-10 items-stretch bg-linear-to-r from-[#1d0a20] to-[#270705] font-['Open_Sans',sans-serif] text-white">
    <button type="button" aria-label="Start" className="flex w-12 items-center justify-center">
      <Icon w={16} h={16}><path d="M0 2.200l6.500-.9v6.200H0zM7.500 1.200L16 0v7.500H7.500zM0 8.500h6.500v6.200L0 13.800zM7.500 8.500H16V16l-8.500-1.200z" fill="#fff" /></Icon>
    </button>
    <label className="mr-[2px] flex w-[343px] items-center border-t border-[#bbb] bg-[#f1f1f1] pl-2 pr-[14px]">
      <Icon w={23} h={23} className="mr-[9px]"><circle cx="11.500" cy="11.500" r="8.500" stroke="#0a0a0a" strokeWidth="3" /></Icon>
      <input
        type="text"
        aria-label="Rechercher"
        placeholder="Taper ici pour rechercher"
        className="min-w-0 flex-1 bg-transparent text-sm text-[#333] outline-none placeholder:text-[#3a3a3a]"
      />
      <Icon w={12} h={16}>
        <path d="M3.500 2.500q0-2 2.500-2t2.500 2v7q0 2-2.500 2t-2.500-2zM.5 8v2q0 3.500 5.500 3.500t5.500-3.500V8M6 13.500V16M3 15.500h6" stroke="#333" />
      </Icon>
    </label>
    {apps.map((app) => (
      <button
        key={app.name}
        type="button"
        aria-label={app.name}
        className={`flex w-[49px] flex-col items-center justify-between ${app.active ? "bg-[#4b3836]" : ""}`}
      >
        <span className="relative mt-2"><Icon w={24} h={24}>{app.art}</Icon>{app.badge && <Badge>{app.badge}</Badge>}</span>
        {app.bar && <span className={`h-[2px] bg-[#76b9ed] ${app.bar}`} />}
      </button>
    ))}
    <div className="ml-auto flex items-center text-xs">
      <Icon w={16} h={16} className="mr-[23px]">
        <path d="M1 15.500q0-5 4-5t4 5M8 8.500q.5-2.500 3-2.500 3.500 0 4 5" stroke="#eee" strokeWidth="1.3" />
        <circle cx="5" cy="7.500" r="2.500" stroke="#eee" strokeWidth="1.3" /><circle cx="11.500" cy="3.500" r="2.500" stroke="#eee" strokeWidth="1.3" />
      </Icon>
      <Icon w={12} h={8} className="mr-2"><path d="M.5 7L6 1.500 11.500 7" stroke="#eee" strokeWidth="1.3" /></Icon>
      <Icon w={17} h={12} className="mr-[9px]">
        <path d="M4 8Q3 2 8 1q4 0 5 5z" fill="#999" />
        <path d="M3 11.500q-3-1-2.500-3.500Q1 6 4 6q2-2.500 5-.5l3 1q4.500 0 4.500 3 0 2-2 2z" fill="#f3f3f3" />
      </Icon>
      <Icon w={15} h={10} className="mr-[11px]"><path d="M.5.5h12.500v9H.5zM14 3v4" stroke="#eee" /><path d="M2 2h6v6H2z" fill="#fff" /></Icon>
      <Icon w={13} h={13} className="mr-[9px]">
        <path d="M.5 12.500Q1 1 12.500.5M3.500 12.500Q4 4 12.500 3.500M6.500 12.500Q7 7 12.500 6.500" stroke="#ccc" strokeWidth="1.2" />
        <circle cx="11" cy="11" r="1.700" fill="#fff" />
      </Icon>
      <Icon w={16} h={14} className="mr-[10px]">
        <path d="M.5 4.500H3l4-3.500v12L3 9.500H.5z" stroke="#eee" />
        <path d="M9 5q1.500 2 0 4M11 3q3 4 0 8" stroke="#eee" /><path d="M13 1q4.500 6 0 12" stroke="#888" />
      </Icon>
      <span className="w-[35px]">FRA</span>
      <div className="flex w-[58px] flex-col items-center text-[11px] leading-[18px]">
        <span>23:43</span>
        <span>10/02/2020</span>
      </div>
      <button type="button" aria-label="Notifications" className="relative ml-[18px] mr-5">
        <Icon w={16} h={16}><path d="M0 1h16v11h-8l-3 3v-3H0z" fill="#fff" /><path d="M3 4.500h10M3 8.500h10" stroke="#2a0c0a" /></Icon>
        <Badge>4</Badge>
      </button>
      <div className="mr-1 h-10 w-px bg-[#5c4341]" />
    </div>
  </nav>
);

export default function App() {
  return (
    <div className="flex min-h-screen flex-col bg-white font-['Liberation_Sans',Arial,sans-serif]">
      <TitleBar />
      <TabBar />
      <Ribbon />
      <Canvas />
      <Timeline />
      <Taskbar />
    </div>
  );
}
